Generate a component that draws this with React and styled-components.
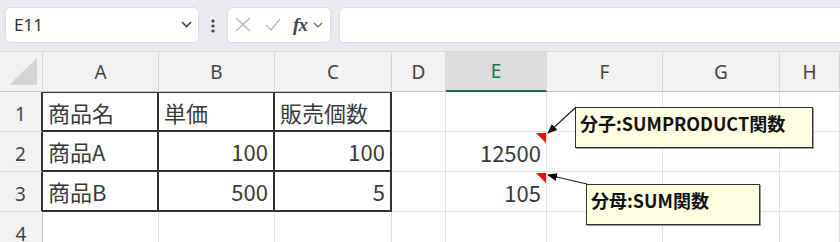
import { createGlobalStyle, styled } from 'styled-components'

const GlobalStyle = createGlobalStyle`
  html, body {
    margin: 0;
    padding: 0;
    background: #ffffff;
    overflow: hidden;
  }
  body {
    font-family: "Noto Sans CJK JP", "Noto Sans", sans-serif;
  }
`

const Page = styled.div`
  width: 840px;
  height: 242px;
  overflow: hidden;
  background: #ffffff;
`

const Toolbar = styled.div`
  display: flex;
  align-items: center;
  height: 52px;
  padding: 0 0 0 5px;
  box-sizing: border-box;
  background: #e8eaee;
  border-bottom: 1px solid #d6d8dc;
`

const FieldBox = styled.div`
  display: flex;
  align-items: center;
  height: 36px;
  margin-top: -2px;
  box-sizing: border-box;
  background: #ffffff;
  border: 1px solid #dcdde1;
  border-radius: 5px;
  width: ${(p) => p.$width};
  flex: ${(p) => (p.$grow ? '1' : 'none')};
`

const FormulaBar = styled(FieldBox)`
  margin-left: 8px;
  border-right: none;
  border-radius: 5px 0 0 5px;
`

const NameText = styled.span`
  flex: 1;
  padding-left: 8px;
  font-family: "Noto Sans", sans-serif;
  font-size: 17px;
  color: #333;
`

const Dots = styled.div`
  width: 28px;
  display: flex;
  justify-content: center;
`

const IconSlot = styled.span`
  display: inline-flex;
  align-items: center;
  justify-content: center;
  width: ${(p) => p.$w || 29}px;
`

const Fx = styled.span`
  font-family: "Liberation Serif", serif;
  font-style: italic;
  font-weight: bold;
  font-size: 19px;
  color: #444;
  letter-spacing: -1px;
`

const Sheet = styled.div`
  position: relative;
  display: grid;
  grid-template-columns: 43px 116px 116px 117px 54px 101px 116px 117px 60px;
  grid-auto-rows: 40px;
`

const Head = styled.div`
  display: flex;
  align-items: center;
  justify-content: center;
  box-sizing: border-box;
  background: ${(p) => (p.$active ? '#dcdcdc' : '#f2f2f2')};
  border-right: 1px solid #d8d8d8;
  border-bottom: ${(p) => (p.$active ? '2px solid #1e7145' : '1px solid #c4c4c4')};
  font-family: "Noto Sans", sans-serif;
  font-size: 19px;
  color: ${(p) => (p.$active ? '#1e7145' : '#444')};
`

const Corner = styled(Head)`
  position: relative;
  &::after {
    content: '';
    position: absolute;
    right: 5px;
    bottom: 6px;
    border-bottom: 27px solid #d4d4d4;
    border-left: 28px solid transparent;
  }
`

const RowHead = styled(Head)`
  border-bottom: 1px solid #d8d8d8;
  border-right: ${(p) => (p.$edge ? '2px solid #333' : '1px solid #c4c4c4')};
  padding-top: 4px;
`

const Cell = styled.div`
  position: relative;
  display: flex;
  align-items: center;
  justify-content: ${(p) => (p.$num ? 'flex-end' : 'flex-start')};
  padding: 0 ${(p) => (p.$num ? '5px' : '0')} 0 ${(p) => (p.$num ? '0' : '5px')};
  box-sizing: border-box;
  border-right: ${(p) => (p.$boxed ? '2px solid #333' : '1px solid #e1e1e1')};
  border-bottom: ${(p) => (p.$boxed ? '2px solid #333' : '1px solid #e1e1e1')};
  font-size: 22px;
  color: #3a3a3a;
  white-space: nowrap;
  ${(p) =>
    p.$topEdge &&
    `
    border-top: 1px solid #333;
  `}
  ${(p) =>
    p.$comment &&
    `
    &::after {
      content: '';
      position: absolute;
      top: 1px;
      right: 0;
      border-top: 10px solid #ff0000;
      border-left: 10px solid transparent;
    }
  `}
`

const Comment = styled.div`
  position: absolute;
  left: ${(p) => p.$x}px;
  top: ${(p) => p.$y}px;
  width: ${(p) => p.$w}px;
  height: ${(p) => p.$h}px;
  box-sizing: border-box;
  padding: 2px 0 0 4px;
  background: #ffffe1;
  border: 1px solid #333;
  box-shadow: 1px 1px 0 #9a9a9a;
  font-family: "Noto Sans CJK JP", sans-serif;
  font-weight: 700;
  font-size: 18px;
  color: #111;
  white-space: nowrap;
  z-index: 3;
`

const Arrows = styled.svg`
  position: absolute;
  left: 0;
  top: 0;
  width: 840px;
  height: 190px;
  pointer-events: none;
  z-index: 4;
`

const cols = ['A', 'B', 'C', 'D', 'E', 'F', 'G', 'H']

const rows = [
  ['商品名', '単価', '販売個数', '', '', '', '', ''],
  ['商品A', '100', '100', '', '12500', '', '', ''],
  ['商品B', '500', '5', '', '105', '', '', ''],
  ['', '', '', '', '', '', '', ''],
]

const isNum = (v) => /^\d+$/.test(v)

export default function App() {
  return (
    <Page>
      <GlobalStyle />
      <Toolbar>
        <FieldBox $width="194px">
          <NameText>E11</NameText>
          <IconSlot $w={24}>
            <svg width="11" height="7" viewBox="0 0 11 7">
              <path d="M1 1l4.5 4.5L10 1" fill="none" stroke="#444" strokeWidth="1.6" />
            </svg>
          </IconSlot>
        </FieldBox>
        <Dots>
          <svg width="4" height="14" viewBox="0 0 4 14">
            <circle cx="2" cy="2" r="1.6" fill="#444" />
            <circle cx="2" cy="7" r="1.6" fill="#444" />
            <circle cx="2" cy="12" r="1.6" fill="#444" />
          </svg>
        </Dots>
        <FieldBox $width="104px">
          <IconSlot $w={30}>
            <svg width="16" height="15" viewBox="0 0 16 15">
              <path d="M1 1l14 13M15 1L1 14" stroke="#b9b9b9" strokeWidth="1.3" />
            </svg>
          </IconSlot>
          <IconSlot $w={30}>
            <svg width="16" height="13" viewBox="0 0 16 13">
              <path d="M1 7l5 5L15 1" fill="none" stroke="#b9b9b9" strokeWidth="1.3" />
            </svg>
          </IconSlot>
          <IconSlot $w={24}>
            <Fx>fx</Fx>
          </IconSlot>
          <IconSlot $w={12}>
            <svg width="10" height="6" viewBox="0 0 10 6">
              <path d="M1 1l4 4 4-4" fill="none" stroke="#666" strokeWidth="1.1" />
            </svg>
          </IconSlot>
        </FieldBox>
        <FormulaBar $grow />
      </Toolbar>
      <Sheet>
        <Corner />
        {cols.map((c) => (
          <Head key={c} $active={c === 'E'}>
            {c}
          </Head>
        ))}
        {rows.map((row, r) => [
          <RowHead key={`h${r}`} $edge={r < 3}>
            {r + 1}
          </RowHead>,
          ...row.map((v, c) => (
            <Cell
              key={`${r}-${c}`}
              $num={isNum(v)}
              $boxed={r < 3 && c < 3}
              $topEdge={r === 0 && c < 3}
              $comment={c === 4 && (r === 1 || r === 2)}
            >
              {v}
            </Cell>
          )),
        ])}
        <Arrows viewBox="0 0 840 190">
          <defs>
            <marker id="head" markerWidth="10" markerHeight="8" refX="9" refY="4" orient="auto" markerUnits="userSpaceOnUse">
              <path d="M0 0L10 4L0 8z" fill="#000" />
            </marker>
          </defs>
          <line x1="575" y1="56" x2="548" y2="81" stroke="#222" strokeWidth="1.2" markerEnd="url(#head)" />
          <line x1="587" y1="132" x2="548" y2="123" stroke="#222" strokeWidth="1.2" markerEnd="url(#head)" />
        </Arrows>
        <Comment $x={575} $y={55} $w={238} $h={41}>
          分子:SUMPRODUCT関数
        </Comment>
        <Comment $x={586} $y={132} $w={174} $h={41}>
          分母:SUM関数
        </Comment>
      </Sheet>
    </Page>
  )
}
